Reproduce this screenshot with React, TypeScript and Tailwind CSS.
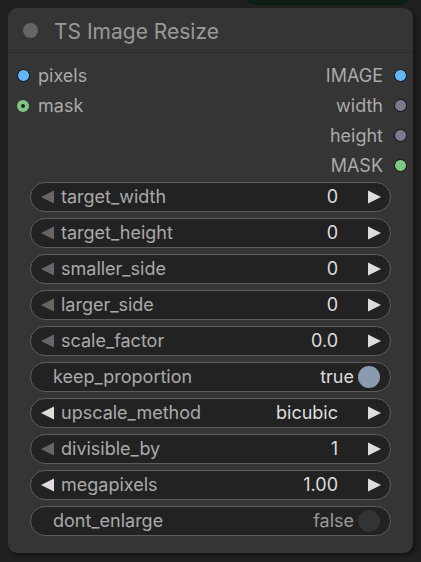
import React from "react";

type Slot = { name: string; color: string; ring?: boolean };

const inputs: Slot[] = [
  { name: "pixels", color: "#64b5f6" },
  { name: "mask", color: "#81c784", ring: true },
];

const outputs: Slot[] = [
  { name: "IMAGE", color: "#64b5f6" },
  { name: "width", color: "#7c7a8a" },
  { name: "height", color: "#7c7a8a" },
  { name: "MASK", color: "#81c784" },
];

type Widget =
  | { kind: "num"; label: string; value: string; leftOn?: boolean }
  | { kind: "toggle"; label: string; on: boolean };

const widgets: Widget[] = [
  { kind: "num", label: "target_width", value: "0" },
  { kind: "num", label: "target_height", value: "0" },
  { kind: "num", label: "smaller_side", value: "0" },
  { kind: "num", label: "larger_side", value: "0" },
  { kind: "num", label: "scale_factor", value: "0.0" },
  { kind: "toggle", label: "keep_proportion", on: true },
  { kind: "num", label: "upscale_method", value: "bicubic", leftOn: true },
  { kind: "num", label: "divisible_by", value: "1" },
  { kind: "num", label: "megapixels", value: "1.00", leftOn: true },
  { kind: "toggle", label: "dont_enlarge", on: false },
];

function Dot({ slot }: { slot: Slot }) {
  if (slot.ring) {
    return (
      <span className="w-[12px] h-[12px] rounded-full border-[4px] border-[#81c784] bg-[#222]" />
    );
  }
  return (
    <span
      className="w-[13px] h-[13px] rounded-full border border-[#111]"
      style={{ backgroundColor: slot.color }}
    />
  );
}

function Arrow({ dir, on }: { dir: "l" | "r"; on: boolean }) {
  const fill = on ? "#dddddd" : "#666666";
  return (
    <svg width="15" height="16" viewBox="0 0 15 16" className="shrink-0">
      {dir === "l" ? (
        <polygon points="14,1.5 14,14.5 1,8" fill={fill} />
      ) : (
        <polygon points="1,1.5 1,14.5 14,8" fill={fill} />
      )}
    </svg>
  );
}

function WidgetRow({ w }: { w: Widget }) {
  if (w.kind === "toggle") {
    return (
      <div className="h-[30px] rounded-full border border-[#5c5c5c] bg-[#222] flex items-center pl-[22px] pr-[10px]">
        <span className="text-[#aaa] flex-1">{w.label}</span>
        <span className={w.on ? "text-[#ddd]" : "text-[#999]"}>{w.on ? "true" : "false"}</span>
        <span
          className={
            "ml-[4px] w-[22px] h-[22px] rounded-full " +
            (w.on ? "bg-[#8a9bb0]" : "bg-[#333]")
          }
        />
      </div>
    );
  }
  return (
    <div className="h-[30px] rounded-full border border-[#5c5c5c] bg-[#222] flex items-center pl-[9px] pr-[8px]">
      <Arrow dir="l" on={!!w.leftOn} />
      <span className="ml-[6px] text-[#aaa] flex-1">{w.label}</span>
      <span className="text-[#ddd] mr-[29px]">{w.value}</span>
      <Arrow dir="r" on={true} />
    </div>
  );
}

export default function App() {
  return (
    <div
      className="w-[421px] h-[562px] bg-[#202020] relative overflow-hidden"
      style={{ fontFamily: "Inter, 'Noto Sans', sans-serif" }}
    >
      {/* corner of a neighbouring node peeking in */}
      <div className="absolute left-[246px] top-[-10px] w-[163px] h-[15px] rounded-b-[8px] bg-[#0d1f12]" />

      <div className="absolute left-[8px] top-[8px] w-[405px] h-[545px] rounded-[9px] bg-[#353535] shadow-[2px_2px_4px_rgba(0,0,0,0.5)]">
        {/* title */}
        <div className="h-[45px] flex items-center border-b border-[#2b2b2b]">
          <span className="ml-[15px] w-[15px] h-[15px] rounded-full bg-[#666]" />
          <span className="ml-[16px] mt-[4px] text-[21px] text-[#999]">TS Image Resize</span>
        </div>

        {/* slots */}
        <div className="flex justify-between pt-[8px] text-[18px] leading-none">
          <div className="flex flex-col">
            {inputs.map((s) => (
              <div key={s.name} className="h-[30px] flex items-center">
                <span className="w-[30px] flex justify-center -mt-[1px]">
                  <Dot slot={s} />
                </span>
                <span className="text-[#aaa]">{s.name}</span>
              </div>
            ))}
          </div>
          <div className="flex flex-col items-end">
            {outputs.map((s) => (
              <div key={s.name} className="h-[30px] flex items-center">
                <span className="text-[#aaa] mr-[4px]">{s.name}</span>
                <span className="w-[26px] flex justify-center -mt-[1px]">
                  <Dot slot={s} />
                </span>
              </div>
            ))}
          </div>
        </div>

        {/* widgets */}
        <div className="mt-[1px] px-[22px] flex flex-col gap-[6px] text-[18px] leading-none">
          {widgets.map((w) => (
            <WidgetRow key={w.label} w={w} />
          ))}
        </div>
      </div>
    </div>
  );
}
